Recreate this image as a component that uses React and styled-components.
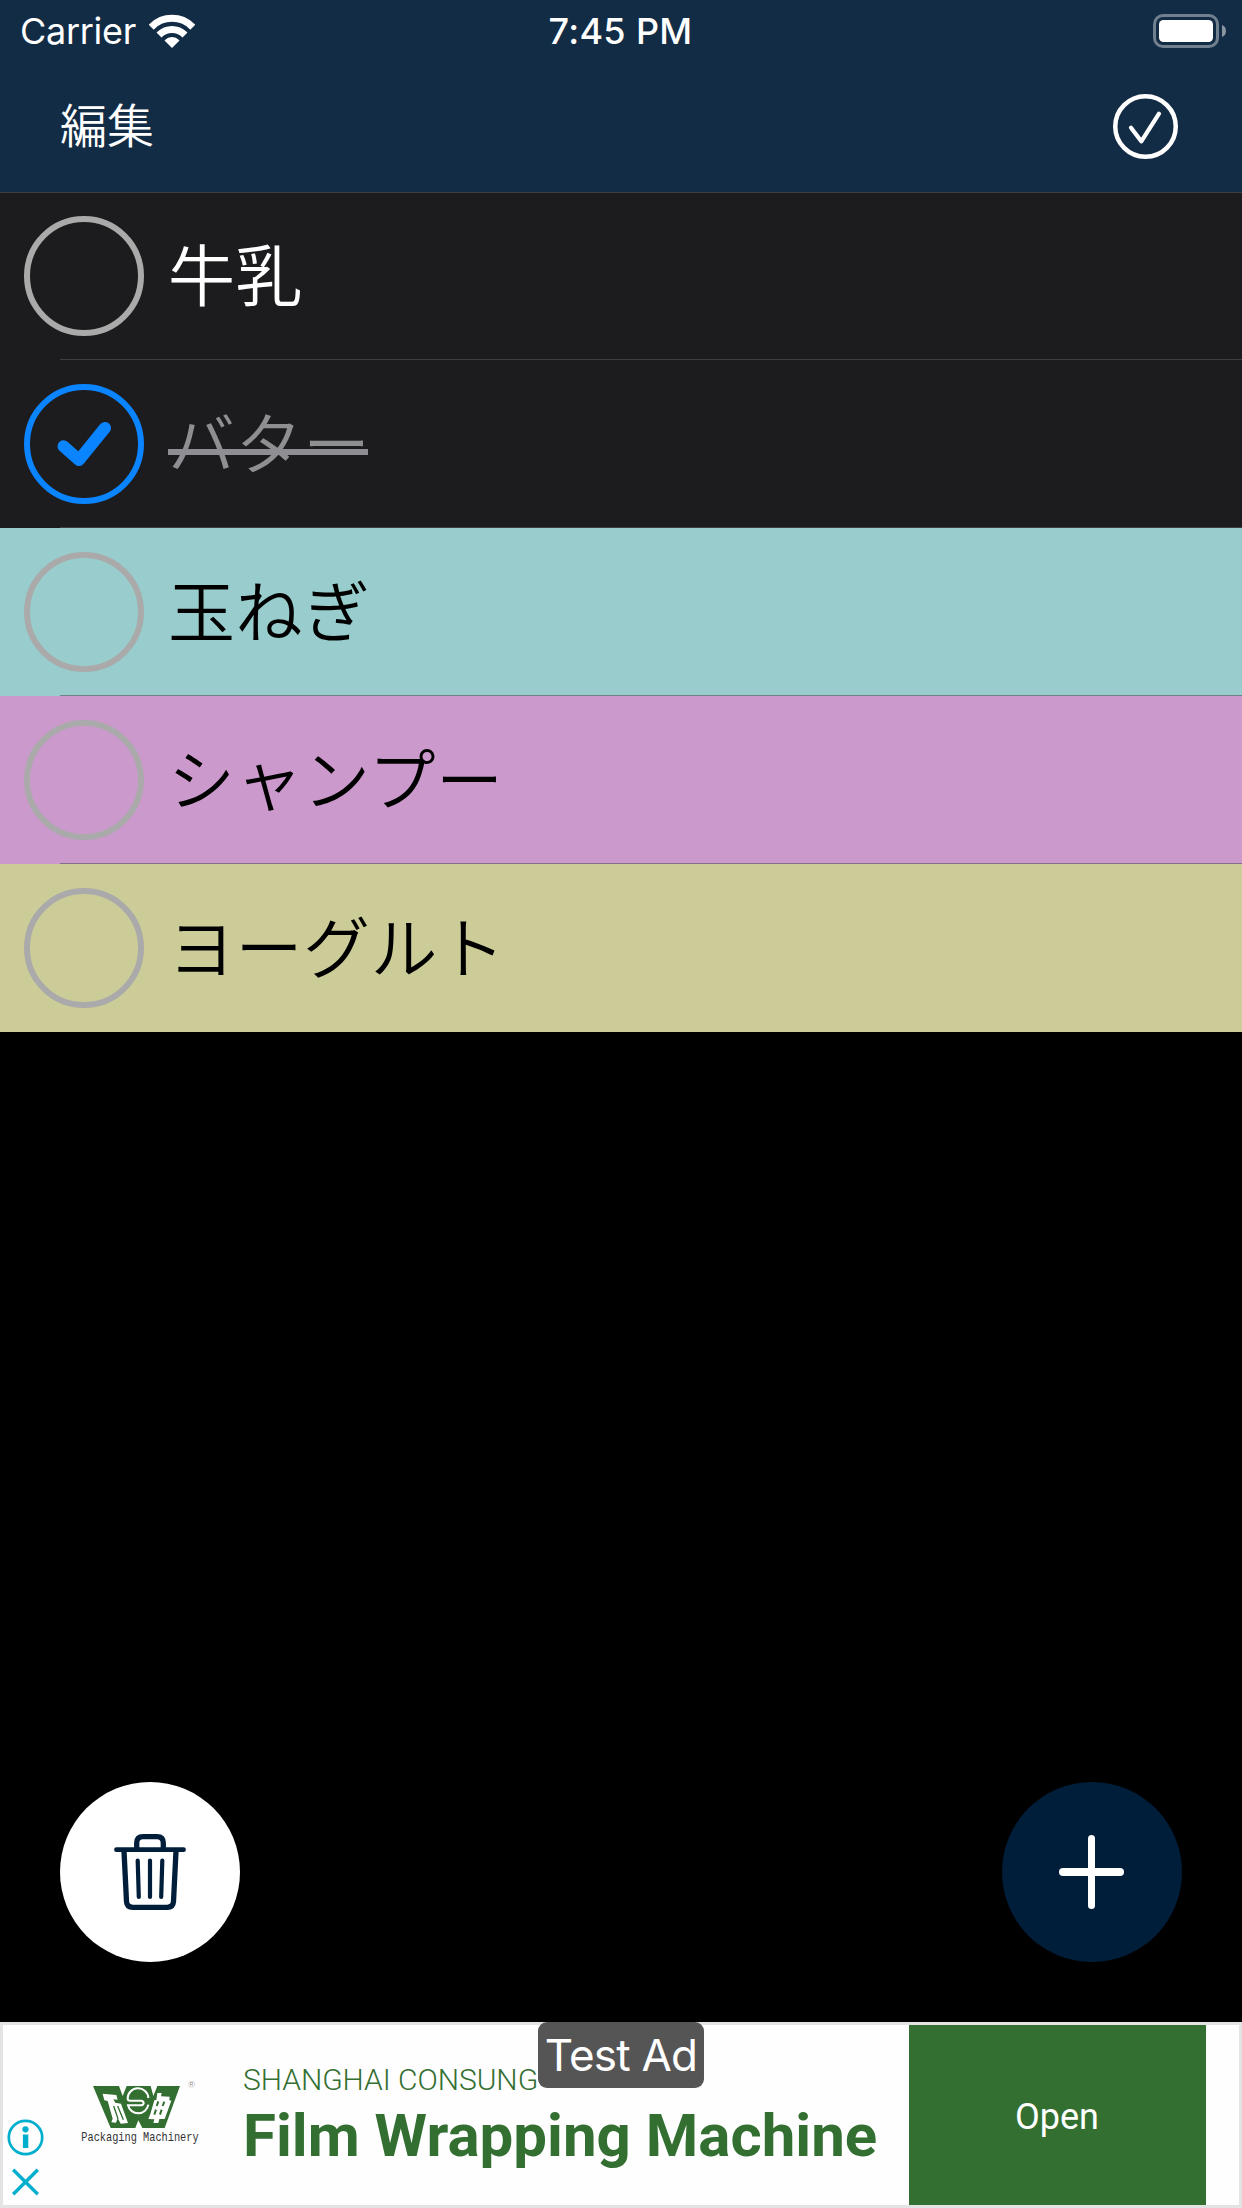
import React from "react";
import styled, { createGlobalStyle } from "styled-components";

const GlobalStyle = createGlobalStyle`
  *, *::before, *::after { box-sizing: border-box; }
  body { margin: 0; background: #000; }
  button { border: 0; padding: 0; margin: 0; background: none; font: inherit; color: inherit; }
  svg { display: block; flex: none; }
`;

const ui = `Inter, "Noto Sans CJK JP", sans-serif`;
const jp = `"Noto Sans CJK JP", sans-serif`;

const Screen = styled.div`
  width: 1242px;
  height: 2208px;
  display: flex;
  flex-direction: column;
  background: #000;
  overflow: hidden;
  font-family: ${ui};
`;

const Header = styled.header`
  height: 192px;
  background: #132c45;
  color: #fff;
  display: flex;
  flex-direction: column;
`;

const StatusBar = styled.div`
  height: 60px;
  padding: 0 16px 0 20px;
  display: grid;
  grid-template-columns: 1fr auto 1fr;
  align-items: center;
`;

const Carrier = styled.div`
  display: flex;
  align-items: center;
  gap: 13px;
  font-size: 36px;
  line-height: 62px;
  letter-spacing: -0.3px;
`;

const Clock = styled.div`
  font-size: 36px;
  font-weight: 500;
  line-height: 62px;
  letter-spacing: 0.35px;
  margin-right: 5px;
`;

const BatterySlot = styled.div`
  justify-self: end;
`;

const NavBar = styled.nav`
  height: 132px;
  padding: 0 64px 0 60px;
  display: flex;
  align-items: center;
  justify-content: space-between;
`;

const EditButton = styled.button`
  font-family: ${jp};
  font-weight: 350;
  font-size: 47px;
  line-height: 64px;
  padding-bottom: 6px;
`;

const List = styled.ul`
  list-style: none;
  margin: 0;
  padding: 0;
`;

const Row = styled.li`
  height: 168px;
  display: flex;
  align-items: center;
  gap: 24px;
  padding: 0 24px;
  color: ${(p) => p.$color};
  background-color: ${(p) => p.$bg};
  background-image: ${(p) => (p.$divider ? "linear-gradient(rgba(84, 84, 88, 0.6), rgba(84, 84, 88, 0.6))" : "none")};
  background-repeat: no-repeat;
  background-size: 100% 1px;
  background-position: 60px 100%;
  box-shadow: ${(p) => (p.$first ? "inset 0 1px 0 #3d3d41" : "none")};
`;

const Ring = styled.button`
  width: 120px;
  height: 120px;
  flex: none;
  border: 6px solid ${(p) => (p.$on ? "#0a84ff" : "#aaaaaa")};
  border-radius: 50%;
  display: flex;
  align-items: center;
  justify-content: center;
`;

const ItemText = styled.span`
  position: relative;
  margin-bottom: 8px;
  font-family: ${jp};
  font-weight: 350;
  font-size: 67px;
  line-height: 90px;
  letter-spacing: 0.5px;
  white-space: nowrap;

  &::after {
    content: "";
    display: ${(p) => (p.$done ? "block" : "none")};
    position: absolute;
    left: 0;
    right: 3px;
    top: 54px;
    height: 6px;
    background: currentColor;
  }
`;

const Body = styled.main`
  flex: 1;
  display: flex;
  align-items: flex-end;
  justify-content: space-between;
  padding: 0 60px 60px;
`;

const RoundButton = styled.button`
  width: 180px;
  height: 180px;
  border-radius: 50%;
  background: ${(p) => p.$bg};
`;

const Ad = styled.aside`
  position: relative;
  height: 186px;
  border: 3px solid #e3e3e3;
  background: #fefefe;
  display: flex;
  color: #346f32;
`;

const AdControls = styled.div`
  width: 42px;
  display: flex;
  flex-direction: column;
  justify-content: flex-end;
  align-items: flex-start;
  gap: 12px;
  padding: 0 0 9px 4px;
`;

const AdLogo = styled.div`
  padding: 45px 0 0 25px;
  width: 198px;
`;

const AdCopy = styled.div`
  flex: 1;
  font-family: Roboto, sans-serif;
  white-space: nowrap;
  padding-top: 36px;
`;

const Advertiser = styled.div`
  font-size: 30px;
  font-weight: 300;
  line-height: 38px;
  letter-spacing: -0.05px;
`;

const Headline = styled.div`
  font-size: 60px;
  font-weight: 700;
  line-height: 73px;
`;

const OpenButton = styled.button`
  width: 297px;
  margin-right: 33px;
  background: #346f32;
  color: #fff;
  font-family: Roboto, sans-serif;
  font-size: 36px;
  line-height: 42px;
  padding: 3px 1px 0 0;
`;

const TestBadge = styled.div`
  position: absolute;
  left: 535px;
  top: -3px;
  width: 166px;
  height: 66px;
  border-radius: 9px;
  background: #555;
  color: #fff;
  font-size: 44px;
  line-height: 66px;
  letter-spacing: -0.8px;
  text-align: center;
  white-space: nowrap;
`;

const Wifi = () => (
  <svg width="46" height="36" viewBox="0 0 46 36">
    <clipPath id="fan">
      <path d="M23 35 L-12 0 V-10 H58 V0 Z" />
    </clipPath>
    <g clipPath="url(#fan)" fill="none" stroke="#fff" strokeWidth="7">
      <circle cx="23" cy="34" r="28.7" />
      <circle cx="23" cy="34" r="17.6" />
      <circle cx="23" cy="34" r="5" strokeWidth="10" />
    </g>
  </svg>
);

const Battery = () => (
  <svg width="73" height="34" viewBox="0 0 73 34">
    <rect x="1.5" y="1.5" width="63" height="31" rx="8.5" fill="none" stroke="#fff" strokeOpacity=".4" strokeWidth="3" />
    <rect x="6" y="6" width="54" height="22" rx="4.5" fill="#fff" />
    <path d="M69 11 C74.300 12.500 74.300 21.500 69 23 Z" fill="#fff" fillOpacity=".5" />
  </svg>
);

const DoneIcon = () => (
  <svg width="65" height="65" viewBox="0 0 65 65" fill="none" stroke="#fff">
    <circle cx="32.500" cy="32.500" r="30.250" strokeWidth="4.500" />
    <path d="M18 33.700 L28.300 47.300 L46 19.700" strokeWidth="4.200" strokeLinecap="round" strokeLinejoin="round" />
  </svg>
);

const Tick = () => (
  <svg width="108" height="108" viewBox="6 6 108 108" fill="none" stroke="#0a84ff">
    <path d="M39.500 62.300 L55 76 L81 43.900" strokeWidth="12" strokeLinecap="round" strokeLinejoin="round" />
  </svg>
);

const Trash = () => (
  <svg width="180" height="180" viewBox="0 0 180 180" fill="none" stroke="#001e3a" strokeLinecap="round" strokeLinejoin="round">
    <path d="M56.500 67.700 H123.500" strokeWidth="4.800" />
    <path d="M76.700 67 V61 Q76.700 54.600 83 54.600 H97 Q103.300 54.600 103.300 61 V67" strokeWidth="5.300" />
    <path d="M64 69 L66.500 119.500 Q66.900 125.300 72.700 125.300 H107.300 Q113.100 125.300 113.500 119.500 L116 69" strokeWidth="5.300" />
    <path d="M77.700 78.500 L78.800 115 M90 78.500 V115 M102.300 78.500 L101.200 115" strokeWidth="4.200" />
  </svg>
);

const Plus = () => (
  <svg width="180" height="180" viewBox="0 0 180 180" stroke="#fff" strokeLinecap="round">
    <path d="M61 90 H118" strokeWidth="8" />
    <path d="M89.500 56.500 V123.500" strokeWidth="7" />
  </svg>
);

const InfoIcon = () => (
  <svg width="37" height="37" viewBox="0 0 37 37">
    <circle cx="18.500" cy="18.500" r="16.700" fill="none" stroke="#00aecd" strokeWidth="2.700" />
    <circle cx="18.500" cy="10.300" r="3.100" fill="#00aecd" />
    <rect x="15.900" y="15.500" width="5.400" height="13.500" fill="#00aecd" />
  </svg>
);

const CloseIcon = () => (
  <svg width="37" height="28" viewBox="0 0 37 28">
    <path d="M6.200 1.700 L30.800 26.300 M30.800 1.700 L6.200 26.300" stroke="#00aecd" strokeWidth="3.400" />
  </svg>
);

const PackagingLogo = () => (
  <svg width="140" height="80" viewBox="0 0 420 240">
    <path d="M69 48 H147 L158 78 L170 48 H242 L250 78 L262 48 H330 L284 174 H217 L205 151 L196 174 H122 Z" fill="#346f32" />
    <path
      d="M235 84 A31 30 0 0 0 173 86 Q173 92 181 92 H214 Q222 94 221 101 M235 104 A31 30 0 0 1 174 106 H211 Q221 106 221 98"
      fill="none"
      stroke="#fff"
      strokeWidth="6"
    />
    <path d="M98 71 L139 75 L143 89 L130 88 L136 98 L153 101 L174 159 L152 161 L143 144 L138 158 L124 157 L128 146 L113 93 L103 91 Z" fill="#fff" />
    <path d="M131 108 L144 146 M143 108 L160 149" stroke="#346f32" strokeWidth="4" />
    <path d="M262 69 L275 69 L273 79 L299 80 L298 91 L304 92 L284 147 L268 147 L265 159 L250 159 L253 148 L235 147 L241 132 L253 91 L259 90 Z" fill="#fff" />
    <path d="M265 94 L260 108 M283 95 L278 108 M258 119 L253 134 M275 119 L270 134" stroke="#346f32" strokeWidth="6" />
    <circle cx="365" cy="43" r="9" fill="none" stroke="#bbb" strokeWidth="1.500" />
    <text x="365" y="48.500" fontFamily="Liberation Sans, sans-serif" fontSize="15" textAnchor="middle" fill="#888">R</text>
    <g transform="translate(34 213) scale(1 1.16)">
      <text fontFamily="Liberation Mono, monospace" fontSize="30.900" fill="#333">Packaging Machinery</text>
    </g>
  </svg>
);

const items = [
  { label: "牛乳", bg: "#1c1c1e", color: "#fff" },
  { label: "バター", bg: "#1c1c1e", color: "#8e8e93", done: true },
  { label: "玉ねぎ", bg: "#99cccc", color: "#000" },
  { label: "シャンプー", bg: "#cc99cc", color: "#000" },
  { label: "ヨーグルト", bg: "#cccc99", color: "#000" },
];

export default function App() {
  return (
    <Screen>
      <GlobalStyle />
      <Header>
        <StatusBar>
          <Carrier>
            Carrier
            <Wifi />
          </Carrier>
          <Clock>7:45 PM</Clock>
          <BatterySlot>
            <Battery />
          </BatterySlot>
        </StatusBar>
        <NavBar>
          <EditButton>編集</EditButton>
          <DoneIcon />
        </NavBar>
      </Header>
      <List>
        {items.map((item, i) => (
          <Row key={item.label} $bg={item.bg} $color={item.color} $first={i === 0} $divider={i < items.length - 1}>
            <Ring $on={item.done}>{item.done && <Tick />}</Ring>
            <ItemText $done={item.done}>{item.label}</ItemText>
          </Row>
        ))}
      </List>
      <Body>
        <RoundButton $bg="#fff" aria-label="削除">
          <Trash />
        </RoundButton>
        <RoundButton $bg="#001e3a" aria-label="追加">
          <Plus />
        </RoundButton>
      </Body>
      <Ad>
        <AdControls>
          <InfoIcon />
          <CloseIcon />
        </AdControls>
        <AdLogo>
          <PackagingLogo />
        </AdLogo>
        <AdCopy>
          <Advertiser>SHANGHAI CONSUNG</Advertiser>
          <Headline>Film Wrapping Machine</Headline>
        </AdCopy>
        <OpenButton>Open</OpenButton>
        <TestBadge>Test Ad</TestBadge>
      </Ad>
    </Screen>
  );
}
